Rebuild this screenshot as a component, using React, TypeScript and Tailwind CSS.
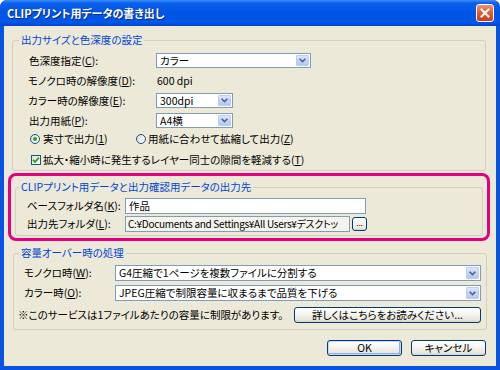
import React from "react";

const font = "font-['Noto_Sans_CJK_JP','Liberation_Sans',sans-serif] [font-feature-settings:'palt']";

function Key({ k }: { k: string }) {
  return <span className="underline">{k}</span>;
}

function Chevron() {
  return (
    <svg width="7" height="5" viewBox="0 0 7 5">
      <path d="M0.6 0.7 L3.5 3.6 L6.4 0.7" fill="none" stroke="#4D6185" strokeWidth="1.5" />
    </svg>
  );
}

function Combo({ value, className }: { value: string; className: string }) {
  return (
    <div className={`flex items-center shrink-0 border border-[#7F9DB9] bg-white ${className}`}>
      <span className="flex-1 pl-[3px] whitespace-nowrap overflow-hidden">{value}</span>
      <span className="flex items-center justify-center w-[13px] h-[calc(100%-2px)] mr-[1px] rounded-[1px] border border-[#BCCDF4] bg-[linear-gradient(180deg,#DCE6FD_0%,#C3D4FA_50%,#B4C8F6_100%)]">
        <Chevron />
      </span>
    </div>
  );
}

function XpButton({ children, className, primary }: { children: React.ReactNode; className: string; primary?: boolean }) {
  return (
    <button
      className={`flex items-center justify-center shrink-0 whitespace-nowrap rounded-[3px] border border-[#003C74] bg-[linear-gradient(180deg,#FFFFFF_0%,#F5F4F0_45%,#E8E5DC_85%,#D6D0C5_100%)] ${
        primary ? "shadow-[inset_0_0_0_1px_#C2D6F8,inset_-1px_-1px_0_1px_#8DB0E8]" : ""
      } ${className}`}
    >
      {children}
    </button>
  );
}

function Group({ title, legendClass, className, children }: { title: string; legendClass: string; className: string; children: React.ReactNode }) {
  return (
    <fieldset className={`border border-[#D0D0BF] rounded-[3px] ${className}`}>
      <legend className={`px-[2px] text-[#0046D5] leading-[14px] whitespace-nowrap ${legendClass}`}>{title}</legend>
      {children}
    </fieldset>
  );
}

function Radio({ checked }: { checked?: boolean }) {
  return (
    <span className="flex items-center justify-center shrink-0 w-[10px] h-[10px] rounded-full border border-[#1C5180] bg-[linear-gradient(135deg,#DCDCD7,#FFFFFF)]">
      {checked && <span className="w-[4px] h-[4px] rounded-full bg-[#2FA02F]" />}
    </span>
  );
}

function Checkbox() {
  return (
    <span className="flex items-center justify-center shrink-0 w-[10px] h-[10px] border border-[#1C5180] bg-[linear-gradient(135deg,#DCDCD7,#FFFFFF)]">
      <svg width="8" height="8" viewBox="0 0 8 8">
        <path d="M1 3.8 L3 6 L7 1.6" fill="none" stroke="#21A121" strokeWidth="1.8" />
      </svg>
    </span>
  );
}

export default function App() {
  return (
    <div className={`w-[500px] h-[370px] bg-white text-[10.5px] leading-[14px] text-black whitespace-nowrap ${font}`}>
      <div className="flex flex-col h-full rounded-t-[7px] overflow-hidden bg-[#0753E2]">
        {/* title bar */}
        <div className="flex items-center h-[26px] pl-[7px] pr-[6px] bg-[linear-gradient(180deg,#3D8DF8_0%,#0A60EB_12%,#0054E3_50%,#0057E8_85%,#0046CF_100%)]">
          <span className="text-white font-bold text-[11px] [text-shadow:1px_1px_0_#0A2A8A]">CLIPプリント用データの書き出し</span>
          <span className="ml-auto flex items-center justify-center w-[18px] h-[18px] rounded-[3px] border border-white bg-[linear-gradient(180deg,#EE916F_0%,#DD5B36_50%,#C8401B_100%)]">
            <svg width="10" height="10" viewBox="0 0 10 10">
              <path d="M1.5 1.5 L8.5 8.5 M8.5 1.5 L1.5 8.5" stroke="white" strokeWidth="2" strokeLinecap="square" />
            </svg>
          </span>
        </div>

        {/* body */}
        <div className="flex-1 mx-[4px] mb-[4px] bg-[#ECE9D8] flex flex-col pt-[7px]">
          <Group title="出力サイズと色深度の設定" legendClass="ml-[6px]" className="ml-[8px] mr-[10px]">
            <div className="flex flex-col pl-[16px] pt-[6px] pb-[3px]">
              <div className="flex items-center h-[15px]">
                <span className="w-[127px] shrink-0">色深度指定(<Key k="C" />):</span>
                <Combo value="カラー" className="w-[155px] h-[15px]" />
              </div>
              <div className="flex items-center h-[15px] mt-[5px]">
                <span className="w-[127px] shrink-0 -ml-[1px]">モノクロ時の解像度(<Key k="D" />):</span>
                <span className="pl-[2px]">600 dpi</span>
              </div>
              <div className="flex items-center h-[15px] mt-[5px]">
                <span className="w-[127px] shrink-0 -ml-[1px]">カラー時の解像度(<Key k="E" />):</span>
                <Combo value="300dpi" className="w-[77px] h-[15px] ml-[1px]" />
              </div>
              <div className="flex items-center h-[15px] mt-[5px]">
                <span className="w-[127px] shrink-0">出力用紙(<Key k="P" />):</span>
                <Combo value="A4横" className="w-[77px] h-[15px]" />
              </div>
              <div className="flex items-center h-[14px] mt-[4px] pl-[1px]">
                <span className="flex items-center gap-[3px] w-[106px] shrink-0">
                  <Radio checked />
                  <span>実寸で出力(<Key k="1" />)</span>
                </span>
                <span className="flex items-center gap-[2px]">
                  <Radio />
                  <span>用紙に合わせて拡縮して出力(<Key k="Z" />)</span>
                </span>
              </div>
              <div className="flex items-center gap-[2px] h-[14px] mt-[7px] pl-[2px]">
                <Checkbox />
                <span>拡大・縮小時に発生するレイヤー同士の隙間を軽減する(<Key k="T" />)</span>
              </div>
            </div>
          </Group>

          <div className="ml-[4px] mr-[6px] mt-[2px] border-[3px] border-[#E4007F] rounded-[8px] px-[4px] pt-[4px] pb-[2px]">
            <Group title="CLIPプリント用データと出力確認用データの出力先" legendClass="ml-[3px]" className="">
              <div className="flex flex-col pl-[11px] pt-[4px] pb-[3px]">
                <div className="flex items-center h-[16px]">
                  <span className="w-[98px] shrink-0">ベースフォルダ名(<Key k="K" />):</span>
                  <div className="flex items-center w-[241px] h-[16px] border border-[#7F9DB9] bg-white pl-[3px]">作品</div>
                </div>
                <div className="flex items-center h-[16px] mt-[2px]">
                  <span className="w-[98px] shrink-0">出力先フォルダ(<Key k="L" />):</span>
                  <div className="flex items-center w-[225px] h-[16px] border border-[#7F9DB9] bg-[#F4F3EC] pl-[2px] overflow-hidden text-[10px] tracking-[-0.3px]">
                    C:¥Documents and Settings¥All Users¥デスクトッ
                  </div>
                  <XpButton className="w-[15px] h-[14px] ml-[2px] text-[8px] leading-none pb-[3px]">...</XpButton>
                </div>
              </div>
            </Group>
          </div>

          <Group title="容量オーバー時の処理" legendClass="ml-[5px]" className="ml-[9px] mr-[9px] mt-[5px]">
            <div className="flex flex-col pl-[4px] pr-[5px] pt-[5px] pb-[6px]">
              <div className="flex items-center h-[16px] pl-[6px]">
                <span className="w-[91px] shrink-0">モノクロ時(<Key k="W" />):</span>
                <Combo value="G4圧縮で1ページを複数ファイルに分割する" className="flex-1 h-[16px]" />
              </div>
              <div className="flex items-center h-[16px] mt-[4px] pl-[6px]">
                <span className="w-[91px] shrink-0">カラー時(<Key k="O" />):</span>
                <Combo value="JPEG圧縮で制限容量に収まるまで品質を下げる" className="flex-1 h-[16px]" />
              </div>
              <div className="flex items-center h-[16px] mt-[6px]">
                <span>※このサービスは1ファイルあたりの容量に制限があります。</span>
                <XpButton className="ml-auto w-[187px] h-[16px]">詳しくはこちらをお読みください...</XpButton>
              </div>
            </div>
          </Group>

          <div className="flex justify-end gap-[9px] pr-[10px] mt-[10px]">
            <XpButton primary className="w-[75px] h-[16px]">OK</XpButton>
            <XpButton className="w-[75px] h-[16px]">キャンセル</XpButton>
          </div>
        </div>
      </div>
    </div>
  );
}
